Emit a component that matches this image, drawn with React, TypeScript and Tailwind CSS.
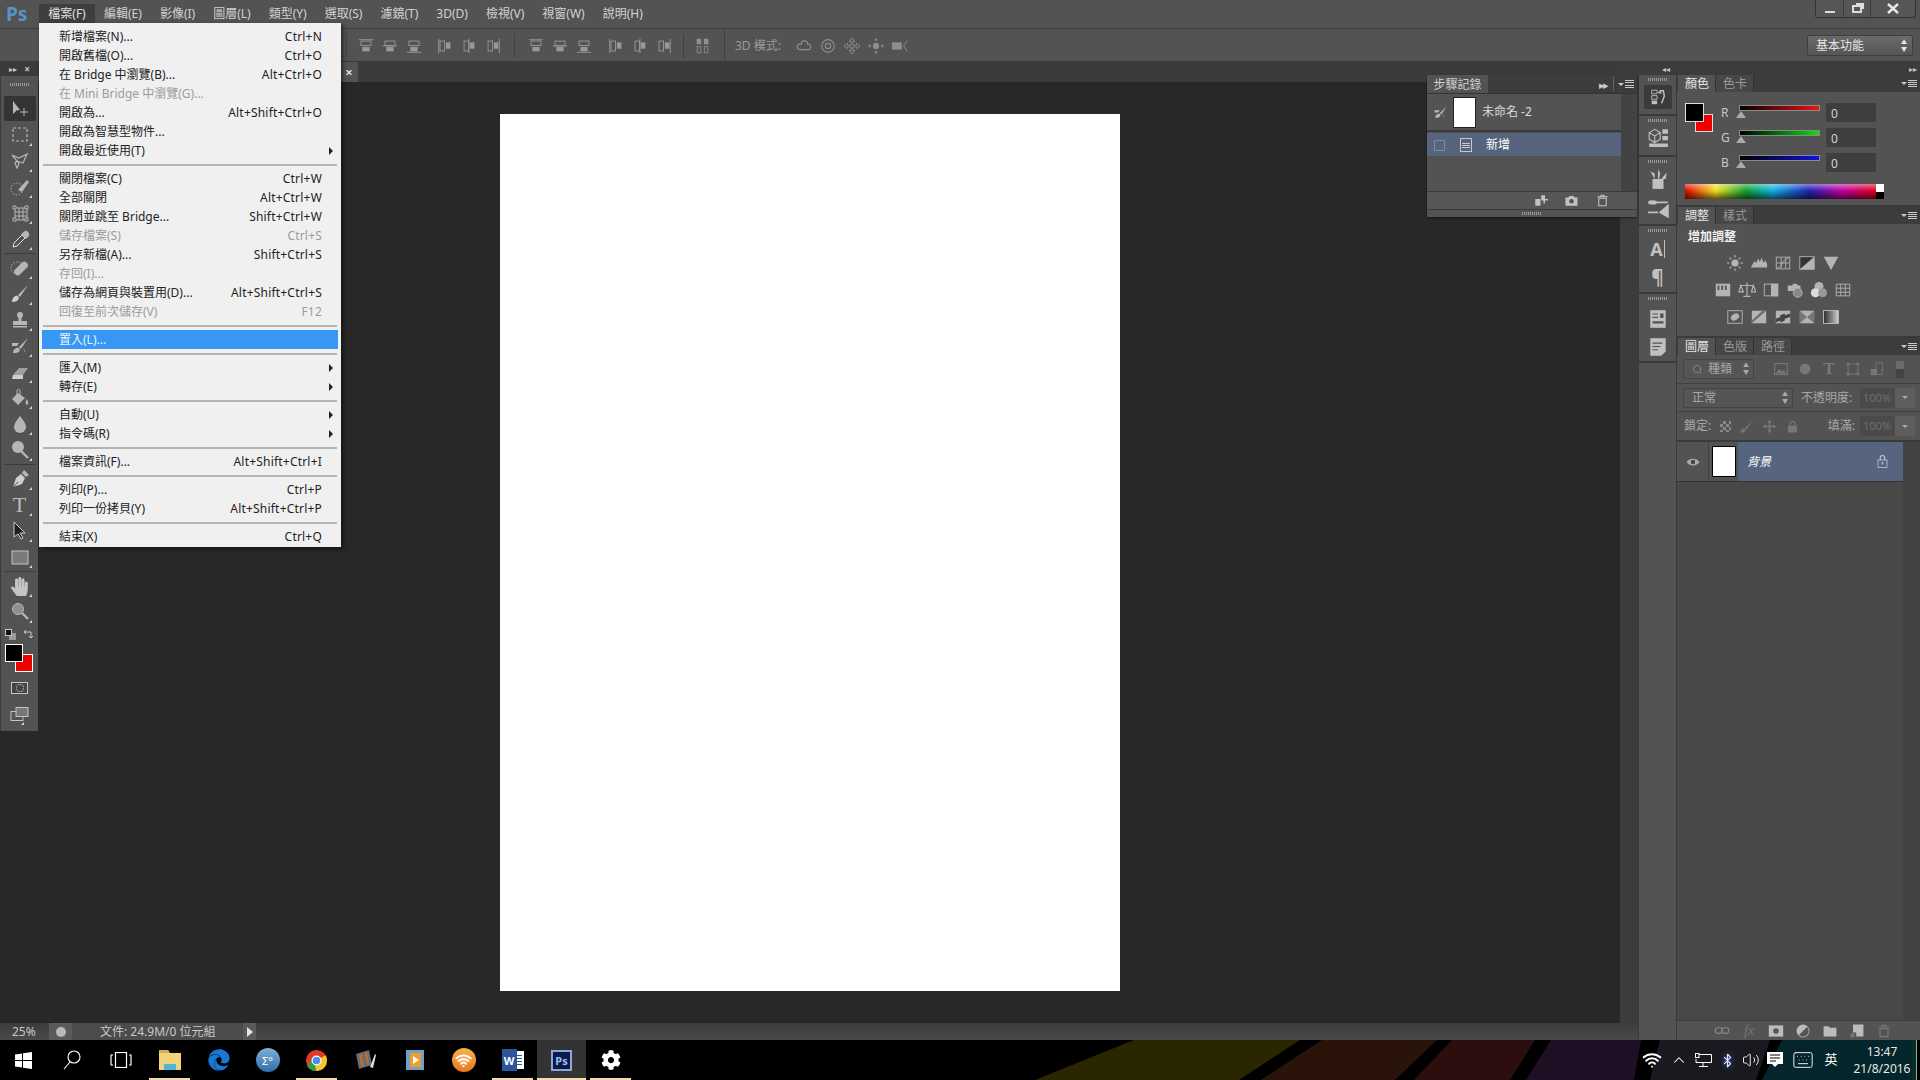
import type { ReactNode } from "react";
import { Bluetooth, ChevronUp, Keyboard, Search, Volume2, Wifi } from "lucide-react";
import { FaCog, FaEdge, FaHandPaper } from "react-icons/fa";

const G = "#b6b6b6";

type MenuRow = { label?: string; keys?: string; off?: boolean; sub?: boolean; on?: boolean };

const fileMenu: MenuRow[] = [
  { label: "新增檔案(N)...", keys: "Ctrl+N" },
  { label: "開啟舊檔(O)...", keys: "Ctrl+O" },
  { label: "在 Bridge 中瀏覽(B)...", keys: "Alt+Ctrl+O" },
  { label: "在 Mini Bridge 中瀏覽(G)...", off: true },
  { label: "開啟為...", keys: "Alt+Shift+Ctrl+O" },
  { label: "開啟為智慧型物件..." },
  { label: "開啟最近使用(T)", sub: true },
  {},
  { label: "關閉檔案(C)", keys: "Ctrl+W" },
  { label: "全部關閉", keys: "Alt+Ctrl+W" },
  { label: "關閉並跳至 Bridge...", keys: "Shift+Ctrl+W" },
  { label: "儲存檔案(S)", keys: "Ctrl+S", off: true },
  { label: "另存新檔(A)...", keys: "Shift+Ctrl+S" },
  { label: "存回(I)...", off: true },
  { label: "儲存為網頁與裝置用(D)...", keys: "Alt+Shift+Ctrl+S" },
  { label: "回復至前次儲存(V)", keys: "F12", off: true },
  {},
  { label: "置入(L)...", on: true },
  {},
  { label: "匯入(M)", sub: true },
  { label: "轉存(E)", sub: true },
  {},
  { label: "自動(U)", sub: true },
  { label: "指令碼(R)", sub: true },
  {},
  { label: "檔案資訊(F)...", keys: "Alt+Shift+Ctrl+I" },
  {},
  { label: "列印(P)...", keys: "Ctrl+P" },
  { label: "列印一份拷貝(Y)", keys: "Alt+Shift+Ctrl+P" },
  {},
  { label: "結束(X)", keys: "Ctrl+Q" },
];

const topMenus = ["編輯(E)", "影像(I)", "圖層(L)", "類型(Y)", "選取(S)", "濾鏡(T)", "3D(D)", "檢視(V)", "視窗(W)", "說明(H)"];

function Svg({ size = 20, children }: { size?: number; children: ReactNode }) {
  return (
    <svg width={size} height={size} viewBox="0 0 20 20" fill="none">
      {children}
    </svg>
  );
}

const tools: Record<string, ReactNode> = {
  marquee: <rect x="3" y="3" width="14" height="13" stroke={G} strokeWidth="1.2" strokeDasharray="3 2" />,
  lasso: <path d="M2 4l7 3 8-4-4 9-6-2 2 3-2 4-2-5 2-2z" stroke={G} strokeWidth="1.2" />,
  quick: (
    <>
      <circle cx="7" cy="12" r="6" stroke={G} strokeDasharray="1.5 1.5" />
      <path d="M8 13L17 3l2 2-7 10z" fill={G} />
    </>
  ),
  crop: (
    <>
      <path d="M5 3v14h12V5H3M9 5v12M13 5v12M5 9h12M5 13h12" stroke={G} />
      <path d="M3 3h3v3H3zM15 3h3v3h-3zM3 15h3v3H3zM15 15h3v3h-3z" fill="#535353" stroke={G} />
    </>
  ),
  dropper: (
    <>
      <path d="M3 18l1-4 8-8 3 3-8 8z" stroke="#e4e4e4" />
      <path d="M11 5l5 5 3-3c1-3-2-6-4-5z" fill={G} />
    </>
  ),
  heal: (
    <>
      <circle cx="7" cy="10" r="6" stroke={G} strokeDasharray="1.5 1.5" />
      <rect x="3" y="7" width="16" height="7" rx="3" transform="rotate(-45 11 10.5)" fill={G} />
    </>
  ),
  brush: (
    <>
      <path d="M18 1L8 11l2 2z" fill={G} />
      <path d="M2 18c0-4 3-7 6-6l1 2c-1 3-4 4-7 4z" fill="#cfcfcf" />
    </>
  ),
  stamp: (
    <>
      <circle cx="10" cy="5" r="3" fill={G} />
      <path d="M8.5 7h3v4h-3zM3 11h14v4H3zM3 16h14v1.5H3z" fill={G} />
    </>
  ),
  history: (
    <>
      <path d="M18 2L9 11l2 2z" fill={G} />
      <path d="M3 17c0-3 3-6 6-5l1 2c-1 3-4 3-7 3zM2 7h7l-2 3H2z" fill={G} />
      <path d="M14 13l1 4" stroke={G} strokeDasharray="1 1" />
    </>
  ),
  eraser: (
    <>
      <path d="M3 13l6-7h9l-5 7z" fill="#a0a0a0" />
      <path d="M3 13h10v4H2z" fill="#cdcdcd" />
    </>
  ),
  bucket: (
    <>
      <path d="M8 5L2 11l6 6 7-7z" fill={G} />
      <path d="M7 8V3a1.5 1.5 0 013 0v4" stroke={G} />
      <path d="M17 11c-1 2-2 3-1 5s3 0 2-2z" fill={G} />
    </>
  ),
  drop: <path d="M10 2S4 9 4 13a6 6 0 0012 0c0-4-6-11-6-11z" fill={G} />,
  dodge: (
    <>
      <circle cx="8" cy="7" r="6" fill={G} />
      <path d="M11 11l7 7" stroke={G} strokeWidth="2.4" />
    </>
  ),
  pen: (
    <>
      <path d="M14 1l5 5-3 2-4-4z" fill={G} />
      <path d="M11 5l4 4-3 6-9 3 3-9z" fill="#cfcfcf" />
      <path d="M3 18l5-5" stroke="#535353" />
    </>
  ),
  path: <path d="M4 1v15l4-3 3 5 2-1-3-5h5z" fill="#1f1f1f" stroke="#cfcfcf" />,
  rect: <rect x="2" y="4" width="16" height="13" fill="#7b7b7b" stroke="#c4c4c4" />,
  zoom: (
    <>
      <circle cx="8" cy="7" r="5.5" fill="#8f8f8f" stroke={G} />
      <path d="M12 11l6 6" stroke={G} strokeWidth="2.4" />
    </>
  ),
};

function Tool({ children }: { children: ReactNode }) {
  return (
    <div className="relative flex h-[26px] w-full items-center justify-center">
      {children}
      <span className="absolute bottom-[2px] right-[6px] h-0 w-0 border-b-[3px] border-l-[3px] border-b-[#d5d5d5] border-l-transparent" />
    </div>
  );
}

function Grip({ className = "w-[20px]" }: { className?: string }) {
  return <div className={`h-[3px] bg-[repeating-linear-gradient(90deg,#9a9a9a_0,#9a9a9a_1px,transparent_1px,transparent_2px)] ${className}`} />;
}

function ToolBar() {
  const first = ["marquee", "lasso", "quick", "crop", "dropper"];
  const second = ["heal", "brush", "stamp", "history", "eraser", "bucket", "drop", "dodge"];
  return (
    <div className="absolute left-0 top-[62px] flex h-[669px] w-[38px] flex-col items-center border-l border-[#3b3b3b] bg-[#535353]">
      <div className="flex h-[14px] w-full items-center justify-between bg-[#3a3a3a] px-[8px] text-[#c8c8c8]">
        <span className="text-[8px] leading-none">▸▸</span>
        <span className="text-[10px] font-bold leading-none">×</span>
      </div>
      <Grip className="mt-[7px] w-[20px]" />
      <div className="mt-[10px] flex h-[25px] w-[32px] items-center justify-center rounded-[2px] bg-[#343434]">
        <Svg>
          <path d="M3 2v13l3.5-3.5L10 11z" fill={G} />
          <path d="M14 9v8M10 13h8" stroke={G} />
        </Svg>
      </div>
      <div className="mt-[1px] w-full">
        {first.map((k) => (
          <Tool key={k}><Svg>{tools[k]}</Svg></Tool>
        ))}
      </div>
      <div className="my-[1px] h-px w-[30px] bg-[#3a3a3a]" />
      <div className="w-full">
        {second.map((k) => (
          <Tool key={k}><Svg>{tools[k]}</Svg></Tool>
        ))}
      </div>
      <div className="my-[1px] h-px w-[30px] bg-[#3a3a3a]" />
      <div className="w-full">
        <Tool><Svg>{tools.pen}</Svg></Tool>
        <Tool><span className="font-['Liberation_Serif',serif] text-[22px] leading-none text-[#bcbcbc]">T</span></Tool>
        <Tool><Svg>{tools.path}</Svg></Tool>
        <Tool><Svg>{tools.rect}</Svg></Tool>
      </div>
      <div className="my-[1px] h-px w-[30px] bg-[#3a3a3a]" />
      <Tool><FaHandPaper size={19} color="#c4c4c4" /></Tool>
      <Tool><Svg>{tools.zoom}</Svg></Tool>
      <div className="mt-[2px] flex h-[14px] w-full items-center justify-between px-[4px]">
        <svg width="11" height="11" viewBox="0 0 11 11">
          <rect x="4" y="4" width="7" height="7" fill="#9a9a9a" />
          <rect x="0.5" y="0.5" width="6" height="6" fill="#111" stroke="#c8c8c8" />
        </svg>
        <svg width="11" height="11" viewBox="0 0 11 11" fill="none" stroke="#c8c8c8">
          <path d="M1 3h7v6M1 3l2-2M1 3l2 2M8 9l-2-2M8 9l2-2" />
        </svg>
      </div>
      <div className="relative mt-[3px] ml-[4px] h-[28px] w-[28px] self-start">
        <div className="absolute left-[10px] top-[10px] h-[18px] w-[18px] border border-white bg-[#ee0000]" />
        <div className="absolute left-0 top-0 h-[18px] w-[18px] border border-white bg-black" />
      </div>
      <div className="mt-[10px] flex h-[12px] w-[17px] items-center justify-center border border-[#c4c4c4] bg-[#444]">
        <span className="h-[8px] w-[8px] rounded-full border border-dotted border-[#ddd]" />
      </div>
      <div className="mt-[7px]">
        <Tool>
          <svg width="20" height="16" viewBox="0 0 20 16">
            <rect x="1" y="5.5" width="12" height="9" fill="#535353" stroke="#c4c4c4" />
            <rect x="6" y="1.5" width="12" height="9" fill="#777" stroke="#c4c4c4" />
          </svg>
        </Tool>
      </div>
    </div>
  );
}

function FileMenu() {
  return (
    <div className="absolute left-[39px] top-[23px] w-[302px] bg-[#f0f0f0] px-[3px] pb-[1px] pt-[4px] text-[12px] text-[#222] shadow-[2px_2px_4px_rgba(0,0,0,0.55)]">
      {fileMenu.map((m, i) =>
        m.label ? (
          <div
            key={i}
            className={`relative flex h-[19px] items-center justify-between pl-[17px] pr-[16px] ${m.on ? "bg-[#3797f5] text-[#e8f2fc]" : ""} ${m.off ? "text-[#9c9c9c]" : ""}`}
          >
            <span>{m.label}</span>
            {m.keys && <span className="tracking-[0.2px]">{m.keys}</span>}
            {m.sub && <span className="absolute right-[5px] h-0 w-0 border-y-[4px] border-l-[4px] border-y-transparent border-l-[#222]" />}
          </div>
        ) : (
          <div key={i} className="flex h-[9px] items-center px-[1px]">
            <div className="h-[2px] w-full bg-[#b4b4b4]" />
          </div>
        ),
      )}
    </div>
  );
}

function MenuBar() {
  return (
    <div className="flex h-[29px] shrink-0 items-center border-b border-[#3a3a3a] bg-[#535353] text-[12px] text-[#d2d2d2]">
      <span className="ml-[6px] w-[33px] text-[19px] font-bold leading-none text-[#5b93c9]">Ps</span>
      <div className="flex h-[24px] w-[56px] items-center justify-center self-end bg-[#3e3e3e] pb-[5px] text-[#e0e0e0]">檔案(F)</div>
      <div className="ml-[9px] flex gap-[18px]">
        {topMenus.map((m) => (
          <span key={m}>{m}</span>
        ))}
      </div>
      <div className="ml-auto mr-[4px] flex h-[18px] w-[101px] self-start rounded-b-[3px] border border-t-0 border-[#333] bg-[#565656]">
        <div className="flex w-[28px] items-end justify-center border-r border-[#3c3c3c] pb-[4px]"><span className="h-[2px] w-[10px] bg-[#ddd]" /></div>
        <div className="flex w-[27px] items-center justify-center border-r border-[#3c3c3c]">
          <span className="relative h-[8px] w-[10px] border-2 border-[#ddd] shadow-[3px_-3px_0_-1px_#ddd]" />
        </div>
        <div className="flex flex-1 items-center justify-center">
          <svg width="12" height="11" viewBox="0 0 12 11" fill="none" stroke="#e8e8e8" strokeWidth="2.4"><path d="M1 1l10 9M11 1L1 10" /></svg>
        </div>
      </div>
    </div>
  );
}

function Align({ v, pos }: { v?: boolean; pos: number }) {
  // one small align glyph: two bars against a guide line, variant set by pos
  const c = "#999";
  const d = [3, 10, 17][pos];
  return (
    <Svg size={18}>
      {v ? (
        <>
          <path d={`M${d} 2v16`} stroke={c} />
          <rect x="4.5" y="4.5" width="5" height="11" stroke={c} />
          <rect x="11" y="6" width="5" height="7" fill={c} />
        </>
      ) : (
        <>
          <path d={`M2 ${d}h16`} stroke={c} />
          <rect x="4.5" y="4.5" width="11" height="5" stroke={c} />
          <rect x="6" y="11" width="8" height="5" fill={c} />
        </>
      )}
    </Svg>
  );
}

function OptionsBar() {
  const g = "#8e8e8e";
  return (
    <div className="flex h-[33px] shrink-0 items-center border-b border-[#3a3a3a] bg-[#535353] pl-[346px] pr-[7px] pt-[1px] text-[12px] text-[#9c9c9c]">
      <div className="h-[24px] w-px bg-[#414141]" />
      <div className="ml-[10px] flex gap-[6px]">
        <Align v={false} pos={0} /><Align v={false} pos={1} /><Align v={false} pos={2} />
      </div>
      <div className="ml-[13px] flex gap-[6px]">
        <Align v pos={0} /><Align v pos={1} /><Align v pos={2} />
      </div>
      <div className="mx-[12px] h-[24px] w-px bg-[#414141]" />
      <div className="flex gap-[6px]">
        <Align v={false} pos={0} /><Align v={false} pos={1} /><Align v={false} pos={2} />
      </div>
      <div className="ml-[14px] flex gap-[6px]">
        <Align v pos={0} /><Align v pos={1} /><Align v pos={2} />
      </div>
      <div className="mx-[10px] h-[24px] w-px bg-[#414141]" />
      <Svg size={18}>
        <path d="M3 2h5v6H3zM11 2h5v6h-5z" fill={g} />
        <path d="M3.5 10.5h4v7h-4zM11.5 10.5h4v7h-4z" stroke={g} />
      </Svg>
      <div className="ml-[12px] h-[31px] w-px bg-[#414141]" />
      <span className="ml-[10px] w-[60px]">3D 模式:</span>
      <div className="flex gap-[6px]">
        <Svg size={18}><path d="M3 13c-2-4 2-6 4-5 0-5 7-5 7 0 3-1 5 3 2 6H5z" stroke={g} strokeWidth="1.3" /></Svg>
        <Svg size={18}><circle cx="10" cy="10" r="7" stroke={g} strokeWidth="1.3" /><circle cx="10" cy="10" r="3" stroke={g} strokeWidth="1.3" /></Svg>
        <Svg size={18}><path d="M10 1l3 4h-2v4h4V7l4 3-4 3v-2h-4v4h2l-3 4-3-4h2v-4H5v2l-4-3 4-3v2h4V5H7z" stroke={g} /></Svg>
        <Svg size={18}><circle cx="10" cy="10" r="3.5" fill={g} /><path d="M10 1l2 3H8zM10 19l2-3H8zM1 10l3 2V8zM19 10l-3 2V8z" fill={g} /></Svg>
        <Svg size={18}><rect x="1" y="6" width="11" height="8" fill={g} /><path d="M18 4l-4 6 4 6" stroke={g} /></Svg>
      </div>
      <div className="ml-auto flex h-[21px] w-[106px] items-center justify-between rounded-[2px] border border-[#3e3e3e] bg-gradient-to-b from-[#6a6a6a] to-[#555] pl-[8px] pr-[5px] text-[#e6e6e6]">
        <span>基本功能</span>
        <span className="flex flex-col text-[6px] leading-[7px]"><span>▲</span><span>▼</span></span>
      </div>
    </div>
  );
}

function PanelMenu() {
  return (
    <span className="mr-[3px] flex items-center gap-[1px] self-center">
      <span className="h-0 w-0 border-x-[3px] border-t-[3px] border-x-transparent border-t-[#ccc]" />
      <span className="flex h-[8px] w-[9px] flex-col justify-between">
        <span className="h-px bg-[#ccc]" /><span className="h-px bg-[#ccc]" /><span className="h-px bg-[#ccc]" /><span className="h-px bg-[#ccc]" />
      </span>
    </span>
  );
}

function Tabs({ items }: { items: string[] }) {
  return (
    <div className="flex h-[17px] shrink-0 items-end bg-[#3c3c3c] pl-[1px] text-[12px]">
      {items.map((t, i) => (
        <div
          key={t}
          className={`flex h-full w-[38px] items-center justify-center border-r border-[#333] pl-[1px] pt-[1px] ${i === 0 ? "bg-[#535353] text-[#e4e4e4]" : "bg-[#474747] text-[#999]"}`}
        >
          {t}
        </div>
      ))}
      <span className="flex-1" />
      <PanelMenu />
    </div>
  );
}

function HistoryPanel() {
  return (
    <div className="absolute left-[1427px] top-[75px] flex h-[142px] w-[210px] flex-col bg-[#535353] text-[12px] text-[#dedede] shadow-[0_1px_2px_rgba(0,0,0,0.5)]">
      <div className="flex h-[19px] items-center border-b border-[#333] bg-[#3c3c3c]">
        <div className="flex h-full w-[61px] items-center justify-center bg-[#535353] pt-[1px] text-[#d0d0d0]">步驟記錄</div>
        <span className="ml-auto mr-[6px] text-[11px] leading-none tracking-[-2px] text-[#ccc]">▸▸</span>
        <span className="mr-[4px] h-[14px] w-px bg-[#666]" />
        <PanelMenu />
      </div>
      <div className="flex flex-1">
        <div className="flex w-[194px] flex-col">
          <div className="flex h-[38px] items-center border-b-2 border-[#3a3a3a]">
            <span className="ml-[6px] w-[20px] text-[#ccc]">
              <Svg size={15}>{tools.history}</Svg>
            </span>
            <span className="h-[31px] w-[23px] border border-[#222] bg-white" />
            <span className="ml-[6px]">未命名 -2</span>
          </div>
          <div className="mt-[1px] flex h-[23px] items-center bg-[#56657d] pt-[1px]">
            <span className="ml-[7px] h-[11px] w-[11px] border border-[#798aa3]" />
            <span className="ml-[15px] flex h-[14px] w-[12px] flex-col justify-center gap-[1px] border border-[#c8c8c8] px-[1px]">
              <span className="h-px bg-[#c8c8c8]" /><span className="h-px bg-[#c8c8c8]" /><span className="h-px bg-[#c8c8c8]" />
            </span>
            <span className="ml-[14px] text-white">新增</span>
          </div>
        </div>
        <div className="flex-1 bg-[#434343]" />
      </div>
      <div className="flex h-[19px] items-center justify-end gap-[16px] border-y border-[#3a3a3a] bg-[#565656] pr-[27px]">
        <Svg size={15}><path d="M3 8h7v9H3zM11 3h5v5h4v2h-4v4h-2v-4h-3z" fill="#c2c2c2" /></Svg>
        <Svg size={15}><path d="M2 6h4l1-2h6l1 2h4v11H2z" fill="#c2c2c2" /><circle cx="10" cy="11" r="3" fill="#535353" /></Svg>
        <Svg size={15}><path d="M3 5h14M8 5V3h4v2M5 7h10v10H5z" stroke="#c2c2c2" strokeWidth="1.4" /></Svg>
      </div>
      <div className="flex h-[7px] items-center justify-center">
        <Grip className="w-[20px]" />
      </div>
    </div>
  );
}

function Dock() {
  const ic = "#c0c0c0";
  const cell = "flex flex-col items-center border-b-2 border-[#3a3a3a] pt-[3px]";
  return (
    <div className="flex w-[39px] shrink-0 flex-col border-x border-[#3a3a3a] bg-[#535353]">
      <div className={`${cell} h-[41px]`}>
        <Grip />
        <div className="mt-[4px] flex h-[24px] w-[28px] items-center justify-center rounded-[2px] bg-[#3b3b3b]">
          <Svg size={18}>
            <path d="M3 2.5h6v4H3zM3 8.5h6v4H3z" stroke={ic} />
            <path d="M3 14h6v4H3z" fill={ic} />
            <path d="M12 3h4l1 6-3 8M13 3l-2 2 3 1" stroke={ic} strokeWidth="1.6" />
          </Svg>
        </div>
      </div>
      <div className={`${cell} h-[41px]`}>
        <Grip />
        <div className="mt-[4px]">
          <Svg size={22}>
            <path d="M2 6l5-3 5 3v6l-5 3-5-3zM7 9v6M2 6l5 3 5-3" stroke={ic} />
            <path d="M14 3h5v4h-5zM14 9h5v4h-5zM2 16h17v3H2z" fill={ic} />
          </Svg>
        </div>
      </div>
      <div className={`${cell} h-[69px]`}>
        <Grip />
        <div className="mt-[5px]">
          <Svg size={22}>
            <path d="M5 10h10v9H5z" fill={ic} />
            <path d="M7 10L3 3l4 2zM10 10V1l2 4-1 5zM13 10l5-6-1 6z" fill={ic} />
          </Svg>
        </div>
        <div className="mt-[8px]">
          <Svg size={22}>
            <ellipse cx="5" cy="4" rx="4" ry="2" fill={ic} />
            <path d="M8 4h11M1 13h9M12 13l7-6v10z" stroke={ic} strokeWidth="1.6" fill={ic} />
          </Svg>
        </div>
      </div>
      <div className={`${cell} h-[68px]`}>
        <Grip />
        <div className="mt-[6px] flex h-[22px] items-center text-[18px] font-bold leading-none text-[#c0c0c0]">
          A<span className="ml-[1px] h-[18px] w-px bg-[#c0c0c0]" />
        </div>
        <div className="mt-[8px] text-[19px] font-bold leading-none text-[#c0c0c0]">¶</div>
      </div>
      <div className={`${cell} h-[69px]`}>
        <Grip />
        <div className="mt-[8px]">
          <Svg size={22}>
            <path d="M3 2h14v16H3z" fill={ic} />
            <path d="M5 5h5v1H5zM5 8h5v1H5zM12 5h3v4h-3zM5 12h10v2H5z" fill="#535353" />
          </Svg>
        </div>
        <div className="mt-[6px]">
          <Svg size={22}>
            <path d="M3 2h14v12l-4 4H3z" fill={ic} />
            <path d="M5 6h9v1H5zM5 9h7v1H5zM5 12h5v1H5z" fill="#535353" />
          </Svg>
        </div>
      </div>
    </div>
  );
}

function Slider({ label, from, to }: { label: string; from: string; to: string }) {
  return (
    <div className="flex h-[25px] items-start">
      <span className="mt-[1px] w-[18px] text-[#c8c8c8]">{label}</span>
      <div className="relative w-[81px]">
        <div className="mt-[2px] h-[6px] w-full border border-[#8a8a8a]" style={{ background: `linear-gradient(90deg, ${from}, ${to})` }} />
        <span className="absolute -left-[3px] top-[8px] h-0 w-0 border-x-[5px] border-b-[7px] border-x-transparent border-b-[#aaa]" />
      </div>
      <div className="ml-[6px] h-[19px] w-[50px] bg-[#3e3e3e] pl-[5px] leading-[21px] text-[#d4d4d4]">0</div>
    </div>
  );
}

function ColorPanel() {
  return (
    <div className="flex h-[132px] shrink-0 flex-col border-b-2 border-[#3a3a3a]">
      <Tabs items={["顏色", "色卡"]} />
      <div className="flex-1 bg-[#535353] pl-[8px] pt-[11px] text-[12px]">
        <div className="flex">
          <div className="relative h-[30px] w-[36px]">
            <div className="absolute left-[10px] top-[11px] h-[18px] w-[18px] border border-[#ddd] bg-[#ee0000]" />
            <div className="absolute left-0 top-0 h-[19px] w-[19px] border border-[#ddd] bg-black" />
          </div>
          <div className="flex flex-col">
            <Slider label="R" from="#000" to="#e11" />
            <Slider label="G" from="#000" to="#1d1" />
            <Slider label="B" from="#000" to="#11d" />
          </div>
        </div>
        <div className="mt-[6px] flex h-[15px] w-[199px]">
          <div className="flex-1 bg-[linear-gradient(180deg,rgba(255,255,255,0.45),transparent_45%,rgba(0,0,0,0.6)),linear-gradient(90deg,#e00000,#f0e020_16%,#10a030_32%,#10b0e0_46%,#2020b0_65%,#c000a0_82%,#e00020)]" />
          <div className="flex w-[8px] flex-col">
            <div className="flex-1 bg-white" />
            <div className="flex-1 bg-black" />
          </div>
        </div>
      </div>
    </div>
  );
}

const box = (children: ReactNode) => <Svg size={18}>{children}</Svg>;
const adj = "#b4b4b4";
const adjustRows: ReactNode[][] = [
  [
    box(<><circle cx="10" cy="10" r="4" fill={adj} /><path d="M10 1v3M10 16v3M1 10h3M16 10h3M4 4l2 2M14 14l2 2M16 4l-2 2M6 14l-2 2" stroke={adj} strokeWidth="1.3" /></>),
    box(<path d="M1 15h18v-4l-2-4-2 3-2-6-2 5-2-4-2 5-2-2-2 3z" fill={adj} />),
    box(<><rect x="2.5" y="3.5" width="15" height="13" stroke={adj} /><path d="M3 16C9 16 10 4 17 4M8 4v12M13 4v12M3 10h14" stroke={adj} /></>),
    box(<><rect x="2" y="3" width="16" height="14" fill="#333" stroke={adj} /><path d="M2 17L18 3v14z" fill={adj} /></>),
    box(<path d="M2 3h16l-8 15z" fill={adj} />),
  ],
  [
    box(<><rect x="2" y="3" width="16" height="14" fill={adj} /><path d="M4 5h2v5H4zM8 5h2v5H8zM12 5h2v5h-2z" fill="#535353" /></>),
    box(<path d="M10 2v15M3 5h14M6 17h8M3 5l-2 7h5zM17 5l-2 7h5z" stroke={adj} strokeWidth="1.3" />),
    box(<><rect x="2.5" y="3.5" width="15" height="13" stroke={adj} /><rect x="10" y="3" width="8" height="14" fill={adj} /></>),
    box(<><path d="M2 5h5l1-2h4l1 2h3v6H2z" fill={adj} /><circle cx="13" cy="13" r="5" fill="#888" stroke={adj} /></>),
    box(<><circle cx="10" cy="6" r="5" fill={adj} /><circle cx="6" cy="13" r="5" fill="#ddd" /><circle cx="14" cy="13" r="5" fill="#999" /></>),
    box(<path d="M2.5 3.5h15v13h-15zM2.5 8h15M2.5 12.5h15M7.5 3.5v13M12.5 3.5v13" stroke={adj} />),
  ],
  [
    box(<><rect x="2" y="3" width="16" height="14" fill="#555" stroke={adj} /><ellipse cx="10" cy="10" rx="5" ry="3.5" transform="rotate(-35 10 10)" fill={adj} /></>),
    box(<><rect x="2" y="3" width="16" height="14" fill={adj} /><path d="M2 14L14 3h4L2 17z" fill="#6b6b6b" /></>),
    box(<><rect x="2" y="3" width="16" height="14" fill={adj} /><path d="M2 12l5-2v-2l5-2v2l6-2v4l-6 2v2l-5 2v-2l-5 2z" fill="#444" /></>),
    box(<><rect x="2" y="3" width="16" height="14" fill={adj} /><path d="M2 3l8 7-8 7zM18 3l-8 7 8 7z" fill="#777" /></>),
    <div key="g" className="h-[14px] w-[16px] border border-[#b4b4b4] bg-gradient-to-r from-[#333] to-[#ccc]" />,
  ],
];

function AdjustPanel() {
  return (
    <div className="flex h-[131px] shrink-0 flex-col border-b-2 border-[#3a3a3a]">
      <Tabs items={["調整", "樣式"]} />
      <div className="flex-1 bg-[#535353]">
        <div className="ml-[11px] mt-[4px] text-[12px] font-bold leading-[18px] text-[#f0f0f0]">增加調整</div>
        <div className="mt-[3px] flex w-[212px] flex-col items-center">
          {adjustRows.map((row, i) => (
            <div key={i} className="flex h-[27px] items-center">
              {row.map((c, j) => (
                <div key={j} className="flex w-[24px] justify-center">{c}</div>
              ))}
            </div>
          ))}
        </div>
      </div>
    </div>
  );
}

function Drop({ className, children }: { className: string; children: ReactNode }) {
  return (
    <div className={`flex h-[20px] shrink-0 items-center justify-between rounded-[2px] border border-[#444] bg-[#555] pl-[8px] pr-[4px] text-[#a8a8a8] ${className}`}>
      {children}
      <span className="flex flex-col text-[6px] leading-[7px] text-[#aaa]"><span>▲</span><span>▼</span></span>
    </div>
  );
}

function PctInput() {
  return (
    <div className="ml-auto mr-[5px] flex h-[20px] w-[55px] shrink-0">
      <div className="w-[35px] bg-[#4a4a4a] pl-[3px] text-[11px] leading-[20px] text-[#6f6f6f]">100%</div>
      <div className="flex flex-1 items-center justify-center bg-[#5e5e5e]">
        <span className="h-0 w-0 border-x-[3px] border-t-[3px] border-x-transparent border-t-[#aaa]" />
      </div>
    </div>
  );
}

function LayersPanel() {
  const dim = "#777";
  return (
    <div className="flex min-h-0 flex-1 flex-col bg-[#535353] text-[12px]">
      <Tabs items={["圖層", "色版", "路徑"]} />
      <div className="flex h-[29px] shrink-0 items-center border-b border-[#414141] pl-[6px]">
        <Drop className="w-[71px]">
          <span className="flex items-center gap-[5px]"><Search size={11} color="#888" /><span>種類</span></span>
        </Drop>
        <div className="ml-[18px] flex gap-[6px]">
          <Svg size={18}><rect x="3" y="4" width="14" height="12" stroke={dim} strokeWidth="1.3" /><path d="M4 15l4-5 3 3 2-2 3 4z" fill={dim} /></Svg>
          <Svg size={18}><circle cx="10" cy="10" r="6" fill={dim} /></Svg>
          <span className="flex w-[18px] justify-center font-['Liberation_Serif',serif] text-[17px] font-bold leading-[18px] text-[#777]">T</span>
          <Svg size={18}><path d="M4.5 4.5h11v11h-11z" stroke={dim} /><path d="M3 3h3v3H3zM14 3h3v3h-3zM3 14h3v3H3zM14 14h3v3h-3z" fill={dim} /></Svg>
          <Svg size={18}><path d="M9 3h7v13H9z" stroke={dim} /><path d="M3 10h7v7H3z" fill={dim} /></Svg>
        </div>
        <div className="ml-[10px] flex h-[17px] w-[8px] flex-col">
          <div className="flex-1 bg-[#6a6a6a]" /><div className="flex-1 bg-[#444]" />
        </div>
      </div>
      <div className="flex h-[28px] shrink-0 items-center border-b border-[#414141] pl-[6px] text-[#a8a8a8]">
        <Drop className="w-[110px]"><span>正常</span></Drop>
        <span className="ml-[8px] whitespace-nowrap">不透明度:</span>
        <PctInput />
      </div>
      <div className="flex h-[30px] shrink-0 items-center border-b-2 border-[#3a3a3a] pl-[7px] text-[#a8a8a8]">
        <span className="whitespace-nowrap">鎖定:</span>
        <div className="ml-[9px] flex items-center gap-[8px]">
          <span className="h-[11px] w-[11px] bg-[conic-gradient(#888_25%,#555_0_50%,#888_0_75%,#555_0)] bg-[length:6px_6px]" />
          <Svg size={15}><path d="M18 2L8 12l2 2zM2 18c0-4 3-6 6-5l1 2c-1 3-4 3-7 3z" fill={dim} /></Svg>
          <Svg size={15}><path d="M10 1l3 4h-2v4h4V7l4 3-4 3v-2h-4v4h2l-3 4-3-4h2v-4H5v2l-4-3 4-3v2h4V5H7z" fill={dim} /></Svg>
          <Svg size={15}><rect x="4" y="9" width="12" height="9" fill={dim} /><path d="M7 9V6a3 3 0 016 0v3" stroke={dim} strokeWidth="1.6" /></Svg>
        </div>
        <span className="ml-auto whitespace-nowrap">填滿:</span>
        <div className="ml-[5px]"><PctInput /></div>
      </div>
      <div className="flex min-h-0 flex-1">
        <div className="flex w-[226px] flex-col bg-[#484848]">
          <div className="flex h-[40px] shrink-0 items-stretch border-b border-[#333] bg-[#535353]">
            <div className="flex w-[32px] items-center justify-center border-r border-[#414141]">
              <svg width="14" height="10" viewBox="0 0 14 10">
                <path d="M0.5 5C3 0.5 11 0.5 13.5 5 11 9.5 3 9.5 0.5 5z" fill="#aaa" />
                <circle cx="7" cy="5" r="2.2" fill="#444" />
              </svg>
            </div>
            <div className="flex w-[29px] items-center justify-center">
              <span className="h-[31px] w-[24px] border border-black bg-white" />
            </div>
            <div className="flex flex-1 items-center justify-between bg-[#56657d] pl-[9px] pr-[13px] text-white">
              <span className="italic">背景</span>
              <Svg size={15}><rect x="4" y="8" width="12" height="10" stroke="#c4cad4" /><path d="M7 8V5a3 3 0 016 0v3" stroke="#c4cad4" strokeWidth="1.4" /><path d="M9 11h2v3H9z" fill="#c4cad4" /></Svg>
            </div>
          </div>
        </div>
        <div className="flex-1 bg-[#424242]" />
      </div>
      <div className="flex h-[20px] shrink-0 items-center gap-[11px] border-t border-[#3a3a3a] pl-[37px] text-[#9a9a9a]">
        <Svg size={16}><rect x="1.5" y="6" width="9" height="7" rx="3.5" stroke="#888" strokeWidth="1.4" /><rect x="9.5" y="6" width="9" height="7" rx="3.5" stroke="#888" strokeWidth="1.4" /></Svg>
        <span className="w-[16px] text-center font-['Liberation_Serif',serif] text-[14px] italic leading-none text-[#777]">fx</span>
        <Svg size={16}><rect x="1" y="3" width="18" height="14" fill="#bbb" /><circle cx="10" cy="10" r="3.5" fill="#555" /></Svg>
        <Svg size={16}><circle cx="10" cy="10" r="8" fill="#bbb" /><path d="M5 15L15 5a7 7 0 01-10 10z" fill="#555" /></Svg>
        <Svg size={16}><path d="M2 4h6l2 2h8v11H2z" fill="#bbb" /></Svg>
        <Svg size={16}><path d="M5 2h13v15H9v-5H5z" fill="#bbb" /><path d="M2 13h5v5H2z" fill="#777" /></Svg>
        <Svg size={16}><path d="M3 5h14M8 5V3h4v2M5 7h10v10H5z" stroke="#777" strokeWidth="1.4" /></Svg>
      </div>
    </div>
  );
}

function Wallpaper() {
  return (
    <svg className="absolute inset-0" width="1920" height="40" viewBox="0 0 1920 40">
      <polygon points="1134,0 1300,0 1239,40 1035,40" fill="#2a2600" />
      <polygon points="1322,0 1437,0 1395,40 1261,40" fill="#2a140a" />
      <polygon points="1452,0 1535,0 1510,40 1414,40" fill="#2c0e0e" />
      <polygon points="1551,0 1641,0 1634,40 1526,40" fill="#1f0f24" />
      <polygon points="1660,0 1770,0 1756,40 1650,40" fill="#19191f" />
      <polygon points="1782,0 1912,0 1912,40 1762,40" fill="#04252b" />
      <rect x="1912" width="5" height="40" fill="#0b2e22" />
      <rect x="1916" width="1" height="40" fill="#8aa" />
    </svg>
  );
}

function AppIcon({ children, on, line, w = "w-[49px]" }: { children: ReactNode; on?: boolean; line?: boolean; w?: string }) {
  return (
    <div className={`relative flex h-[40px] items-center justify-center ${w} ${on ? "bg-[#333]" : ""}`}>
      {children}
      {line && <span className={`absolute bottom-0 h-[2px] bg-[#f1ddb2] ${on ? "inset-x-0" : "inset-x-[4px]"}`} />}
    </div>
  );
}

function Taskbar() {
  return (
    <div className="relative flex h-[40px] shrink-0 items-center bg-black text-white">
      <Wallpaper />
      <div className="relative flex h-full items-center">
        <AppIcon w="w-[47px]">
          <svg width="17" height="17" viewBox="0 0 17 17" fill="#fff"><path d="M0 2.5l7-1V8H0zM8 1.3L17 0v8H8zM0 9h7v6.5l-7-1zM8 9h9v8l-9-1.3z" /></svg>
        </AppIcon>
        <AppIcon>
          <svg width="18" height="20" viewBox="0 0 18 20" fill="none" stroke="#fff" strokeWidth="1.1"><circle cx="11" cy="7" r="6" /><path d="M7 12l-6 7" /></svg>
        </AppIcon>
        <AppIcon>
          <svg width="22" height="16" viewBox="0 0 22 16" fill="none" stroke="#fff" strokeWidth="1.2"><rect x="5.5" y="0.5" width="11" height="15" /><path d="M3 3H1v10h2M19 3h2v10h-2" /></svg>
        </AppIcon>
        <AppIcon line>
          <svg width="22" height="20" viewBox="0 0 22 20"><path d="M0 0h9l2 3h11v17H0z" fill="#f3d27a" /><path d="M5 20v-6h12v6z" fill="#4bb6d6" /><path d="M0 0h9l1 3H0z" fill="#d6ae5a" /></svg>
        </AppIcon>
        <AppIcon><FaEdge size={22} color="#1878d6" /></AppIcon>
        <AppIcon>
          <div className="flex h-[24px] w-[24px] items-center justify-center rounded-full bg-gradient-to-b from-[#7fb0d8] to-[#2f6ea8] text-[11px] leading-none text-white">Σ°</div>
        </AppIcon>
        <AppIcon line>
          <svg width="23" height="23" viewBox="0 0 24 24">
            <circle cx="12" cy="12" r="11" fill="#e0392b" />
            <path d="M12 12L2.5 18A11 11 0 0012 23z" fill="#2f9e44" />
            <path d="M2.5 18L12 12l9.5-5.5A11 11 0 0123 12a11 11 0 01-11 11z" fill="#f6c52c" />
            <path d="M12 23a11 11 0 01-9.5-5L8 9z" fill="#2f9e44" />
            <circle cx="12" cy="12" r="5.2" fill="#fff" />
            <circle cx="12" cy="12" r="4" fill="#4a8fe7" />
          </svg>
        </AppIcon>
        <AppIcon>
          <svg width="24" height="22" viewBox="0 0 24 22"><path d="M2 5l13-4 3 15-13 4z" fill="#5f6f7c" /><path d="M5 6l3-1 2 12-3 1zM11 4l2-1 2 12-2 1z" fill="#c26a2e" /><path d="M16 18l5-13 1 1-3 13z" fill="#ddd" /></svg>
        </AppIcon>
        <AppIcon>
          <svg width="20" height="22" viewBox="0 0 20 22"><path d="M1 1h18v20H1z" fill="#6ea3c8" /><path d="M5 4h11v14H5z" fill="#f59a2c" /><path d="M8 7l6 4-6 4z" fill="#fff" /></svg>
        </AppIcon>
        <AppIcon>
          <div className="flex h-[24px] w-[24px] items-center justify-center rounded-full bg-gradient-to-b from-[#f6b24a] to-[#e8791a]">
            <Wifi size={17} color="#fff" strokeWidth={3} />
          </div>
        </AppIcon>
        <AppIcon line>
          <div className="relative flex h-[22px] w-[22px] items-center">
            <div className="absolute right-0 flex h-[18px] w-[13px] flex-col justify-center gap-[2px] bg-white px-[2px]">
              <span className="h-px bg-[#2b579a]" /><span className="h-px bg-[#2b579a]" /><span className="h-px bg-[#2b579a]" /><span className="h-px bg-[#2b579a]" />
            </div>
            <div className="relative flex h-[22px] w-[15px] items-center justify-center bg-[#2b579a] text-[11px] font-bold leading-none text-white">W</div>
          </div>
        </AppIcon>
        <AppIcon on line>
          <div className="flex h-[21px] w-[21px] items-center justify-center border-2 border-[#8ea6d8] bg-[#0c1a4a] text-[11px] font-bold leading-none text-[#9fc0f0]">Ps</div>
        </AppIcon>
        <AppIcon line><FaCog size={20} color="#fff" /></AppIcon>
      </div>
      <div className="relative ml-auto flex h-full items-center pr-[9px] text-[12px]">
        <div className="flex w-[24px] justify-center"><Wifi size={20} strokeWidth={2.4} /></div>
        <div className="ml-[3px] flex w-[24px] justify-center"><ChevronUp size={18} strokeWidth={1.4} /></div>
        <div className="flex w-[24px] justify-center">
          <svg width="17" height="14" viewBox="0 0 17 14" fill="none" stroke="#fff"><path d="M4 1.5h12.5v8H1V6M8 10v3M4 13.5h9" /><rect x="0.5" y="0.5" width="3.5" height="4" /></svg>
        </div>
        <div className="flex w-[24px] justify-center"><Bluetooth size={15} color="#dbe8ff" className="drop-shadow-[0_0_3px_#2a70e0]" /></div>
        <div className="flex w-[24px] justify-center"><Volume2 size={18} strokeWidth={1.2} /></div>
        <div className="flex w-[24px] justify-center">
          <svg width="16" height="16" viewBox="0 0 16 16"><path d="M0 0h16v12h-5l-3 3-3-3H0z" fill="#fff" /><path d="M3 3h10M3 6h10M3 9h6" stroke="#000" /></svg>
        </div>
        <div className="flex w-[32px] justify-center"><Keyboard size={22} strokeWidth={1} /></div>
        <div className="flex w-[24px] justify-center text-[13px]">英</div>
        <div className="flex w-[68px] flex-col items-center pl-[10px] text-[12px] leading-[17px] text-[#e8e8e8]">
          <span>13:47</span>
          <span>21/8/2016</span>
        </div>
      </div>
    </div>
  );
}

function StatusBar() {
  return (
    <div className="flex h-[17px] shrink-0 items-center bg-gradient-to-b from-[#3c3c3c] to-[#4a4a4a] text-[12px] text-[#c8c8c8]">
      <span className="w-[49px] pl-[12px]">25%</span>
      <div className="flex h-full w-[23px] items-center justify-center bg-[#5a5a5a]">
        <span className="h-[10px] w-[10px] rounded-full bg-[#b8b8b8]" />
      </div>
      <div className="flex h-full w-[171px] items-center bg-[#4c4c4c] pl-[28px]">文件: 24.9M/0 位元組</div>
      <div className="flex h-full w-[13px] items-center justify-center bg-[#5a5a5a]">
        <span className="h-0 w-0 border-y-[5px] border-l-[6px] border-y-transparent border-l-[#e4e4e4]" />
      </div>
    </div>
  );
}

export default function App() {
  return (
    <div className="relative flex h-[1080px] w-[1920px] flex-col overflow-hidden bg-[#282828] font-['Noto_Sans','Noto_Sans_CJK_TC',sans-serif]">
      <MenuBar />
      <OptionsBar />
      <div className="flex min-h-0 flex-1">
        <div className="flex w-[1638px] shrink-0 flex-col">
          <div className="flex min-h-0 flex-1">
            <div className="flex w-[1620px] flex-col">
              <div className="h-[20px] shrink-0 bg-[#3b3b3b] pl-[340px]">
                <div className="flex h-full w-[18px] items-center justify-center bg-[#535353] text-[13px] font-bold leading-none text-[#ddd]">×</div>
              </div>
              <div className="flex min-h-0 flex-1 items-center justify-center bg-[#282828]">
                <div className="mb-[1px] h-[877px] w-[620px] bg-white" />
              </div>
            </div>
            <div className="flex-1 bg-[#3c3c3c]" />
          </div>
          <StatusBar />
        </div>
        <div className="flex min-w-0 flex-1 flex-col">
          <div className="flex h-[13px] shrink-0 items-center justify-between bg-[#3c3c3c] pl-[24px] pr-[3px] text-[8px] leading-none text-[#c4c4c4]">
            <span>◂◂</span>
            <span>▸▸</span>
          </div>
          <div className="flex min-h-0 flex-1">
            <Dock />
            <div className="flex min-w-0 flex-1 flex-col">
              <ColorPanel />
              <AdjustPanel />
              <LayersPanel />
            </div>
          </div>
        </div>
      </div>
      <Taskbar />
      <ToolBar />
      <FileMenu />
      <HistoryPanel />
    </div>
  );
}
